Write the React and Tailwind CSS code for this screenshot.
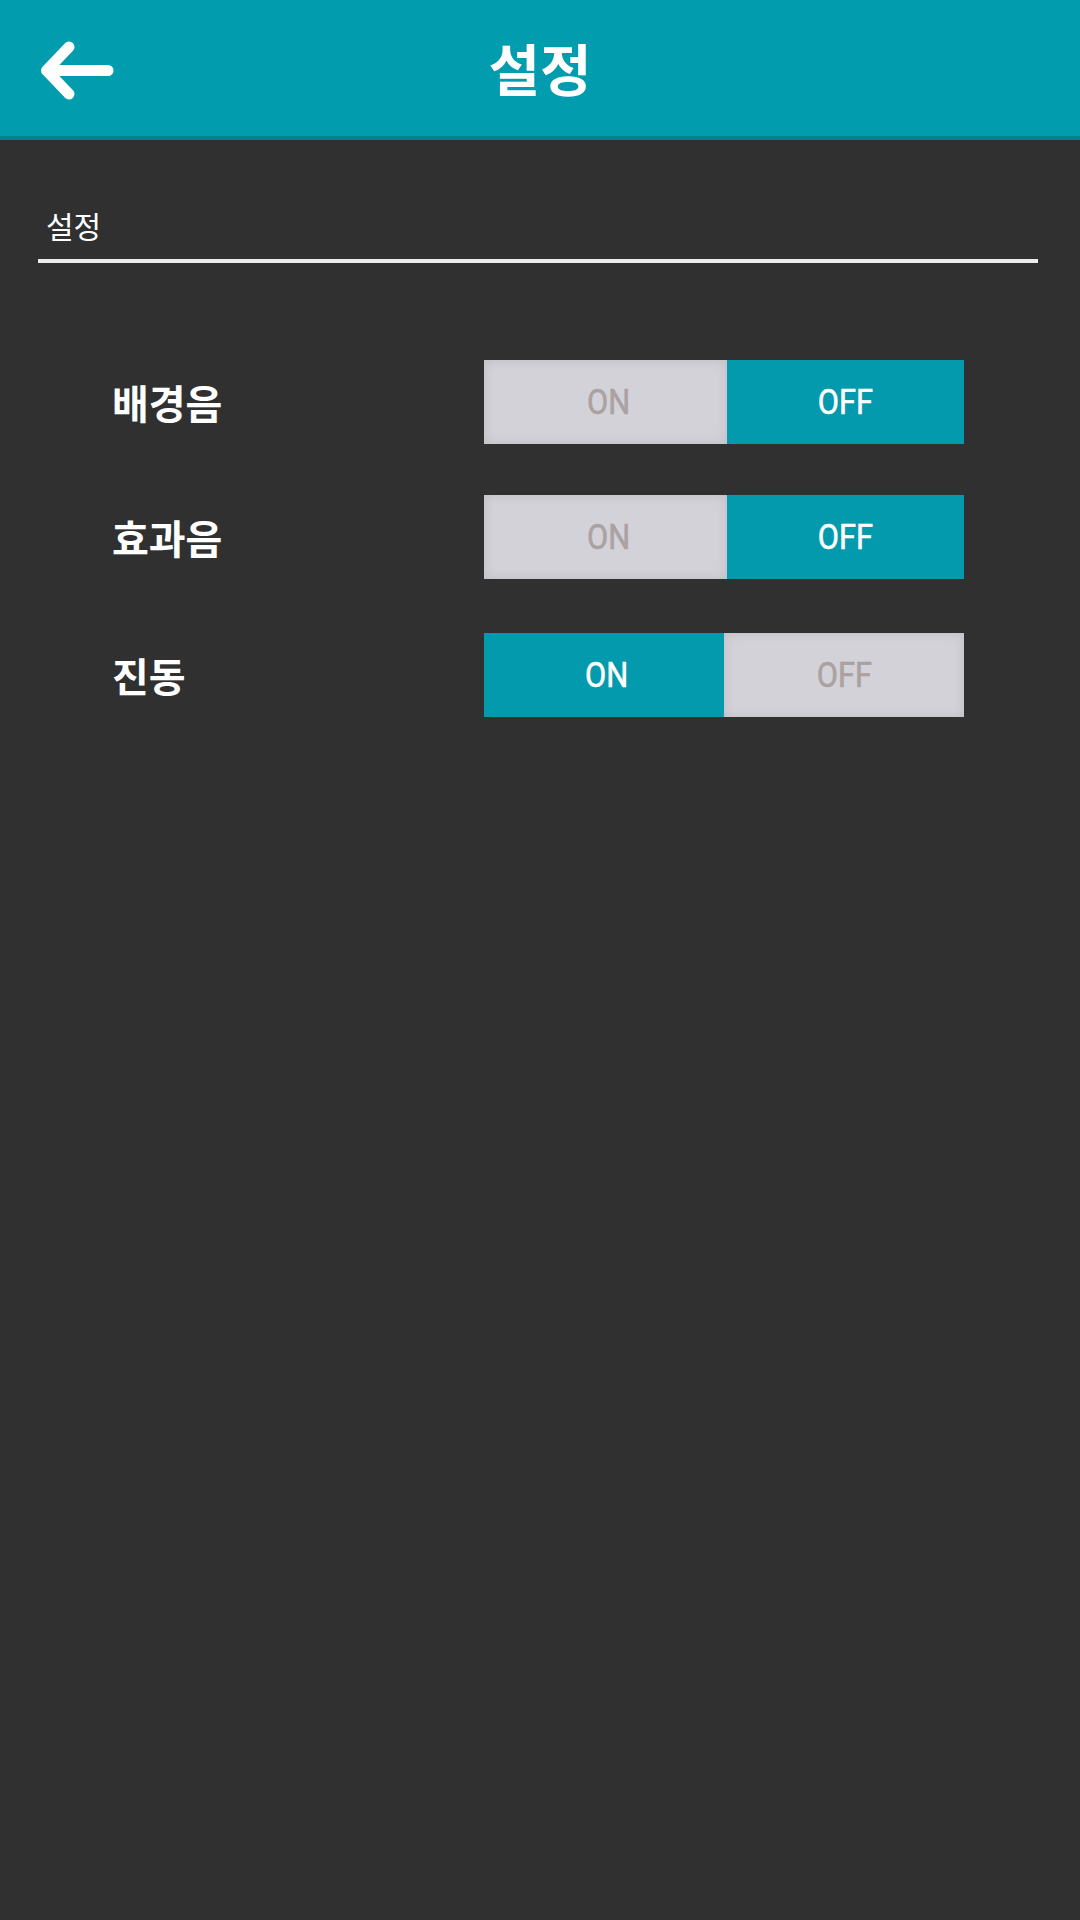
import { useState } from 'react'

const KR = { fontFamily: '"Noto Sans CJK KR", "Noto Sans", sans-serif' }
const RB = { fontFamily: 'Roboto, "Liberation Sans", sans-serif' }

function Toggle({ value, onChange, split = 243 }) {
  const cell = 'flex items-center justify-center'
  const on = 'bg-[#039aad] text-white'
  const off = 'bg-[#d2d2d8] text-[#aca1a1] shadow-[inset_0_0_12px_rgba(0,0,0,0.1)]'
  const label = 'inline-block text-[35px] font-normal leading-none scale-x-[0.88] [-webkit-text-stroke:0.6px_currentColor]'
  return (
    <div className="flex w-[480px] h-[84px]" style={RB}>
      <button
        onClick={() => onChange(true)}
        className={`${cell} pl-[6px] ${value ? on : off}`}
        style={{ width: split }}
      >
        <span className={label} style={RB}>ON</span>
      </button>
      <button
        onClick={() => onChange(false)}
        className={`${cell} flex-1 ${value ? off : on}`}
      >
        <span className={label} style={RB}>OFF</span>
      </button>
    </div>
  )
}

export default function App() {
  const [bgm, setBgm] = useState(false)
  const [sfx, setSfx] = useState(false)
  const [vibe, setVibe] = useState(true)

  const rows = [
    { label: '배경음', value: bgm, set: setBgm, mt: 'mt-[97px]', split: 243 },
    { label: '효과음', value: sfx, set: setSfx, mt: 'mt-[51px]', split: 243 },
    { label: '진동', value: vibe, set: setVibe, mt: 'mt-[54px]', split: 240 },
  ]

  return (
    <div className="min-h-[1920px] w-[1080px] bg-[#303030]" style={KR}>
      {/* header */}
      <div className="grid grid-cols-[1fr_auto_1fr] items-center h-[140px] bg-[#029caf] border-b-4 border-[#00838f]">
        <button className="pl-[36px] pt-[4px] flex items-center h-full">
          <svg width="84" height="70" viewBox="36 35 84 70" fill="none">
            <path
              d="M108 70.5H47M69 47L46.5 70.5L69 94"
              stroke="white"
              strokeWidth="11"
              strokeLinecap="round"
              strokeLinejoin="round"
            />
          </svg>
        </button>
        <h1 className="text-[56px] font-bold text-white leading-none pb-[2px]">설정</h1>
        <div />
      </div>

      <div className="pl-[38px] pr-[42px]">
        <div className="pt-[68px] pl-[8px] text-[30px] leading-[34px] text-white">설정</div>
        <div className="mt-[17px] h-[4px] bg-[#ececec]" />

        {rows.map((r) => (
          <div key={r.label} className={`flex items-center ${r.mt}`}>
            <div className="w-[446px] pl-[74px] text-[40px] font-bold text-white leading-none">
              {r.label}
            </div>
            <Toggle value={r.value} onChange={r.set} split={r.split} />
          </div>
        ))}
      </div>
    </div>
  )
}
